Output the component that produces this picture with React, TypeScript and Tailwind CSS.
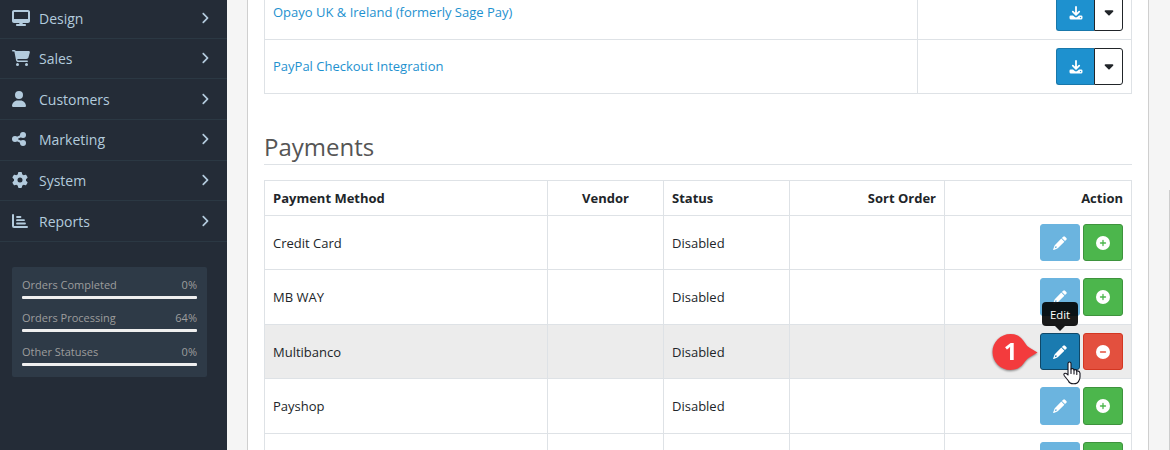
import type { ReactNode } from 'react';
import {
  FaAngleRight,
  FaCaretDown,
  FaCartShopping,
  FaDesktop,
  FaGear,
  FaUser,
} from 'react-icons/fa6';

const menu: { label: string; icon: ReactNode; row: string }[] = [
  { label: 'Design', row: 'h-[39px]', icon: <FaDesktop className="h-4 w-[18px]" /> },
  { label: 'Sales', row: 'h-[40px]', icon: <FaCartShopping className="h-4 w-[18px]" /> },
  { label: 'Customers', row: 'h-[41px] pt-0.5', icon: <FaUser className="h-4 w-[14px]" /> },
  { label: 'Marketing', row: 'h-[41px]', icon: <ShareIcon /> },
  { label: 'System', row: 'h-[40px]', icon: <FaGear className="size-4" /> },
  { label: 'Reports', row: 'h-[41px] pt-0.5', icon: <ReportIcon /> },
];

const stats = [
  { label: 'Orders Completed', value: '0%', row: 'h-[33px]' },
  { label: 'Orders Processing', value: '64%', row: 'h-[34px]' },
  { label: 'Other Statuses', value: '0%', row: 'h-[33px]' },
];

const payments = [
  { name: 'Credit Card', row: 'h-[54px]', button: 'h-[37px]' },
  { name: 'MB WAY', row: 'h-[55px]', button: 'h-[38px]' },
  { name: 'Multibanco', row: 'h-[54px]', button: 'h-[37px]', installed: true },
  { name: 'Payshop', row: 'h-[55px]', button: 'h-[38px]' },
  { name: '', row: 'h-[54px]', button: 'h-[37px]' },
];

const columns = 'grid grid-cols-[283px_116px_126px_155px_186px]';

function ReportIcon() {
  return (
    <svg viewBox="0 0 16 16" className="size-4" fill="none" stroke="currentColor" strokeLinecap="round">
      <path d="M1 2V13Q1 14 2 14H15" strokeWidth="2" />
      <path d="M5 4H8.500M5 7.200H12M5 10.500H13" strokeWidth="1.8" />
    </svg>
  );
}

function ShareIcon() {
  return (
    <svg viewBox="0 0 14 16" className="h-4 w-[14px]" fill="currentColor">
      <path d="M3 8L11 4M3 8L11 12" stroke="currentColor" strokeWidth="2.2" />
      <circle cx="3" cy="8" r="3" />
      <circle cx="11" cy="4" r="3" />
      <circle cx="11" cy="12" r="3" />
    </svg>
  );
}

function DownloadIcon() {
  return (
    <svg viewBox="0 0 14 14" className="size-[14px]" fill="none" stroke="currentColor" strokeLinecap="round" strokeLinejoin="round">
      <path d="M7 1V8.500M3.800 5.700L7 8.800L10.200 5.700" strokeWidth="1.8" />
      <path
        d="M1.800 9.500H4L5.800 11.100Q7 12 8.200 11.100L10 9.500H12.200Q13.500 9.500 13.500 10.700V12Q13.500 13.500 12 13.500H2Q0.500 13.500 0.500 12V10.700Q0.500 9.500 1.800 9.500Z"
        fill="currentColor"
        stroke="none"
      />
      <circle cx="11.500" cy="11.600" r="0.700" fill="#1e91cf" stroke="none" />
    </svg>
  );
}

function PencilIcon() {
  return (
    <svg viewBox="0 0 14 14" className="size-[14px]" fill="currentColor">
      <path d="M10.200 0.700Q11.100 -0.200 12 0.700L13.300 2Q14.200 2.900 13.300 3.800L12 5.100L8.900 2Z" />
      <path
        fillRule="evenodd"
        d="M8.300 2.600L11.400 5.700L5.300 11.800Q4.900 12.200 4.400 12.400L0.800 13.900Q-0.100 14.100 0.200 13.200L1.400 9.900Q1.600 9.300 2 8.900ZM2.400 10.300L1.700 12.300L3.800 11.600L3.700 10.500Z"
      />
    </svg>
  );
}

function CircleIcon({ plus }: { plus: boolean }) {
  return (
    <svg viewBox="0 0 14 14" className="size-[14px]">
      <circle cx="7" cy="7" r="7" fill="white" />
      <path
        d={plus ? 'M4.500 7H9.500M7 4.500V9.500' : 'M4.500 7H9.500'}
        stroke={plus ? '#4cb64c' : '#e3503e'}
        strokeWidth="1.300"
        strokeLinecap="round"
      />
    </svg>
  );
}

function Sidebar() {
  return (
    <aside className="h-full w-[227px] shrink-0 bg-[#242c37]">
      <nav>
        {menu.map((m) => (
          <div
            key={m.label}
            className={`flex items-center border-b border-[#2b3843] pr-[15px] pl-3 text-[#b3cbdd] ${m.row}`}
          >
            <span className="flex w-[27px] -translate-y-px">{m.icon}</span>
            <span className="flex-1 text-[14px] leading-5">{m.label}</span>
            <FaAngleRight className="size-[14px] -translate-y-px" />
          </div>
        ))}
      </nav>
      <section className="mx-3 mt-[25px] h-[110px] w-[195px] rounded-[2px] bg-[#2e3a47] px-[10px] pt-2 text-[11px] text-[#9d9d9d]">
        {stats.map((s) => (
          <div key={s.label} className={s.row}>
            <div className="flex h-[21px] items-start justify-between leading-5">
              <span>{s.label}</span>
              <span>{s.value}</span>
            </div>
            <div className="h-[3px] rounded-[1px] bg-[#efefef]" />
          </div>
        ))}
      </section>
    </aside>
  );
}

function DownloadRow({ name, row }: { name: string; row: string }) {
  return (
    <div className={`grid shrink-0 grid-cols-[653px_213px] border-b border-[#dee2e6] ${row}`}>
      <a className="flex items-center border-r border-[#dee2e6] pl-2 text-[#1e91cf]">{name}</a>
      <div className="flex items-center justify-end pr-2">
        <span className="flex h-[37px] w-[38px] items-center justify-center rounded-l-[3px] border border-r-0 border-[#1978ab] bg-[#1e91cf] text-white">
          <DownloadIcon />
        </span>
        <span className="flex h-[37px] w-[29px] items-center justify-center rounded-r-[3px] border border-[#212529] pb-px text-[#212529]">
          <FaCaretDown className="size-[14px]" />
        </span>
      </div>
    </div>
  );
}

function Marker() {
  return (
    <svg viewBox="0 0 50 44" className="absolute -top-[4px] -left-[52px] z-10 h-[44px] w-[50px] drop-shadow-[0_1px_1px_rgba(0,0,0,0.45)]">
      <path
        d="M21.500 4C11.500 4 3.500 12 3.500 22S11.500 40 21.500 40C29 40 33 36 36 31.500Q37.500 29 41 27L48.500 22.500L41 18Q37.500 16 36 13C33 8 29 4 21.500 4Z"
        fill="#f33b3d"
      />
      <text x="21.500" y="30" textAnchor="middle" fill="#fff" fontFamily="Noto Sans" fontSize="24" fontWeight="700">
        1
      </text>
    </svg>
  );
}

function Tooltip() {
  return (
    <div className="absolute -top-[32px] left-[1px] z-10 flex flex-col items-center">
      <div className="flex h-6 w-9 items-center justify-center rounded-[4px] bg-black/90 pt-px text-[11.400px] text-white">Edit</div>
      <div className="h-0 w-0 border-x-[5px] border-t-[5px] border-x-transparent border-t-black/90" />
    </div>
  );
}

function Pointer() {
  return (
    <svg viewBox="0 0 19 24" className="absolute top-[27px] left-[22px] z-20 h-6 w-[19px]">
      <path
        d="M5 2.500Q5 1 6.500 1T8 2.500V8Q10.500 7 11 9Q13 8 13.700 10Q16.500 9.500 17 12V16Q17 18 16 19.500Q15 22.800 10.500 22.800Q6.500 22.800 5.500 20L1.500 15Q0 12.500 2 12.200Q3.500 12 5 14Z"
        fill="white"
        stroke="#15151f"
        strokeWidth="1.1"
        strokeLinejoin="round"
      />
      <path d="M8 8V12.500M11 9V13M13.800 10V13.500" stroke="#15151f" strokeWidth="1.1" strokeLinecap="round" />
    </svg>
  );
}

export default function App() {
  return (
    <div className="flex h-[450px] w-[1170px] overflow-hidden bg-[#f5f5f5] font-['Open_Sans',sans-serif] text-[13px] text-[#212529]">
      <Sidebar />
      <main className="ml-5 h-full w-[902px] border-x border-[#cfcfcf] bg-white px-4">
        <div className="flex h-[94px] w-[868px] flex-col justify-end border-x border-[#dee2e6]">
          <DownloadRow name="Opayo UK & Ireland (formerly Sage Pay)" row="h-[54px]" />
          <DownloadRow name="PayPal Checkout Integration" row="h-[54px]" />
        </div>
        <h2 className="mt-[35px] h-9 w-[868px] border-b border-[#dee2e6] text-[24px] leading-[36px] text-[#555555]">Payments</h2>
        <div className="mt-[15px] w-[868px] border border-b-0 border-[#dee2e6]">
          <div className={`${columns} h-[35px] border-b border-[#dee2e6] font-bold *:flex *:items-center *:border-r *:border-[#dee2e6] *:px-2 *:pt-0.5`}>
            <span>Payment Method</span>
            <span className="justify-center">Vendor</span>
            <span>Status</span>
            <span className="justify-end">Sort Order</span>
            <span className="justify-end border-r-0!">Action</span>
          </div>
          {payments.map((p, i) => (
            <div
              key={i}
              className={`${columns} border-b border-[#dee2e6] *:flex *:border-r *:border-[#dee2e6] *:px-2 ${p.row} ${p.installed ? 'bg-[#ececec]' : ''}`}
            >
              <span className="items-center pt-0.5">{p.name}</span>
              <span />
              <span className="items-center pt-0.5">{p.name && 'Disabled'}</span>
              <span />
              <div className="items-start justify-end gap-[3px] border-r-0! pt-2">
                <div
                  className={`relative flex w-10 items-center justify-center rounded-[3px] border text-white ${p.button} ${p.installed ? 'border-[#0f4868] bg-[#1a7bb0]' : 'border-[#6bb4df] bg-[#6bb4df]'}`}
                >
                  <PencilIcon />
                  {p.installed && (
                    <>
                      <Marker />
                      <Tooltip />
                      <Pointer />
                    </>
                  )}
                </div>
                <div
                  className={`flex w-10 items-center justify-center rounded-[3px] border ${p.button} ${p.installed ? 'border-[#d33722] bg-[#e3503e]' : 'border-[#3e933d] bg-[#4cb64c]'}`}
                >
                  <CircleIcon plus={!p.installed} />
                </div>
              </div>
            </div>
          ))}
        </div>
      </main>
      <div className="mt-[190px] ml-auto w-px bg-[#cdcdcd]" />
    </div>
  );
}
